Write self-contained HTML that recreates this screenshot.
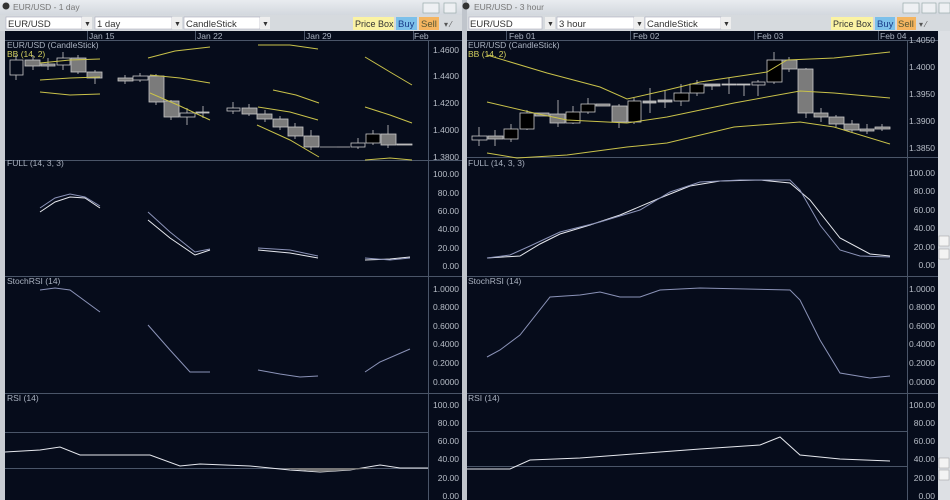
<!DOCTYPE html>
<html><head><meta charset="utf-8"><style>
body{margin:0;width:950px;height:500px;overflow:hidden;background:#c9cdd3;font-family:"Liberation Sans",sans-serif}
svg{position:absolute;left:0;top:0}
text{font-family:"Liberation Sans",sans-serif}
</style></head><body>
<svg width="950" height="500" viewBox="0 0 950 500">
<defs><linearGradient id="tb" x1="0" y1="0" x2="0" y2="1"><stop offset="0" stop-color="#e9ecf0"/><stop offset="1" stop-color="#d3d8de"/></linearGradient></defs>
<rect x="0" y="0" width="950" height="15" fill="url(#tb)"/>
<rect x="0" y="15" width="950" height="16" fill="#d6dade"/>
<rect x="462" y="0" width="5" height="500" fill="#c0c5cc"/>
<circle cx="6" cy="6" r="3.5" fill="#333"/><text x="13" y="10" font-size="8.5" fill="#777">EUR/USD - 1 day</text>
<circle cx="466" cy="6" r="3.5" fill="#333"/><text x="474" y="10" font-size="8.5" fill="#777">EUR/USD - 3 hour</text>
<rect x="423" y="3" width="16" height="10" fill="#eef0f3" stroke="#9aa" stroke-width=".7"/><rect x="444" y="3" width="12" height="10" fill="#eef0f3" stroke="#9aa" stroke-width=".7"/>
<rect x="903" y="3" width="16" height="10" fill="#eef0f3" stroke="#9aa" stroke-width=".7"/><rect x="922" y="3" width="14" height="10" fill="#eef0f3" stroke="#9aa" stroke-width=".7"/><rect x="939" y="3" width="11" height="10" fill="#eef0f3" stroke="#9aa" stroke-width=".7"/>
<g font-size="9.5" fill="#333">
<rect x="6" y="17" width="76" height="12" fill="#fff" stroke="#aab" stroke-width=".6"/><text x="8" y="27">EUR/USD</text><rect x="82" y="17" width="10" height="12" fill="#eee"/><text x="84" y="26" font-size="7">▼</text>
<rect x="95" y="17" width="77" height="12" fill="#fff" stroke="#aab" stroke-width=".6"/><text x="97" y="27">1 day</text><rect x="172" y="17" width="10" height="12" fill="#eee"/><text x="174" y="26" font-size="7">▼</text>
<rect x="184" y="17" width="76" height="12" fill="#fff" stroke="#aab" stroke-width=".6"/><text x="186" y="27">CandleStick</text><rect x="260" y="17" width="10" height="12" fill="#eee"/><text x="262" y="26" font-size="7">▼</text>
<rect x="353" y="17" width="41" height="13" fill="#fbf3a3"/><text x="355" y="27" font-size="9">Price Box</text>
<rect x="396" y="17" width="21" height="13" fill="#7cc0ea"/><text x="398" y="27" fill="#1a3c8a">Buy</text>
<rect x="419" y="17" width="20" height="13" fill="#f5b560"/><text x="421" y="27" fill="#553">Sell</text>
<text x="444" y="27" font-size="8" fill="#555">▾ ⁄</text>
<rect x="469" y="17" width="73" height="12" fill="#fff" stroke="#aab" stroke-width=".6"/><text x="470" y="27">EUR/USD</text><rect x="545" y="17" width="10" height="12" fill="#eee"/><text x="547" y="26" font-size="7">▼</text>
<rect x="557" y="17" width="77" height="12" fill="#fff" stroke="#aab" stroke-width=".6"/><text x="559" y="27">3 hour</text><rect x="634" y="17" width="10" height="12" fill="#eee"/><text x="636" y="26" font-size="7">▼</text>
<rect x="645" y="17" width="76" height="12" fill="#fff" stroke="#aab" stroke-width=".6"/><text x="647" y="27">CandleStick</text><rect x="721" y="17" width="10" height="12" fill="#eee"/><text x="723" y="26" font-size="7">▼</text>
<rect x="831" y="17" width="42" height="13" fill="#fbf3a3"/><text x="833" y="27" font-size="9">Price Box</text>
<rect x="875" y="17" width="20" height="13" fill="#7cc0ea"/><text x="877" y="27" fill="#1a3c8a">Buy</text>
<rect x="897" y="17" width="19" height="13" fill="#f5b560"/><text x="898" y="27" fill="#553">Sell</text>
<text x="919" y="27" font-size="8" fill="#555">▾ ⁄</text>
</g>
<rect x="5" y="31" width="457" height="469" fill="#060c1b"/>
<rect x="467" y="31" width="471" height="469" fill="#060c1b"/>
<rect x="938" y="31" width="12" height="469" fill="#dde0e4"/>
<rect x="939" y="236" width="10" height="10" fill="#f3f3f3" stroke="#999" stroke-width=".5"/><rect x="939" y="249" width="10" height="10" fill="#f3f3f3" stroke="#999" stroke-width=".5"/>
<rect x="939" y="458" width="10" height="10" fill="#f3f3f3" stroke="#999" stroke-width=".5"/><rect x="939" y="470" width="10" height="10" fill="#f3f3f3" stroke="#999" stroke-width=".5"/>
<g stroke="#4a5568" stroke-width="1" fill="none">
<line x1="5" y1="40.5" x2="462" y2="40.5"/><line x1="467" y1="40.5" x2="938" y2="40.5"/>
<line x1="428.5" y1="40" x2="428.5" y2="500"/><line x1="907.5" y1="40" x2="907.5" y2="500"/>
<line x1="5" y1="160.5" x2="462" y2="160.5"/><line x1="467" y1="157.5" x2="938" y2="157.5"/>
<line x1="5" y1="276.5" x2="462" y2="276.5"/><line x1="467" y1="276.5" x2="938" y2="276.5"/>
<line x1="5" y1="393.5" x2="462" y2="393.5"/><line x1="467" y1="393.5" x2="938" y2="393.5"/>
<line x1="5" y1="432.5" x2="428" y2="432.5"/><line x1="5" y1="468.5" x2="428" y2="468.5"/>
<line x1="467" y1="431.5" x2="907" y2="431.5"/><line x1="467" y1="466.5" x2="907" y2="466.5"/>
<line x1="87.5" y1="31" x2="87.5" y2="40"/><line x1="195.5" y1="31" x2="195.5" y2="40"/><line x1="304.5" y1="31" x2="304.5" y2="40"/><line x1="413.5" y1="31" x2="413.5" y2="40"/>
<line x1="506.5" y1="31" x2="506.5" y2="40"/><line x1="630.5" y1="31" x2="630.5" y2="40"/><line x1="754.5" y1="31" x2="754.5" y2="40"/><line x1="878.5" y1="31" x2="878.5" y2="40"/>
</g>
<g font-size="8.5" fill="#aab2c0">
<text x="89" y="39">Jan 15</text><text x="197" y="39">Jan 22</text><text x="306" y="39">Jan 29</text><text x="414" y="39">Feb</text>
<text x="509" y="39">Feb 01</text><text x="633" y="39">Feb 02</text><text x="757" y="39">Feb 03</text><text x="880" y="39">Feb 04</text>
<text x="7" y="48">EUR/USD (CandleStick)</text><text x="468" y="48">EUR/USD (CandleStick)</text>
<text x="7" y="166">FULL (14, 3, 3)</text><text x="468" y="166">FULL (14, 3, 3)</text>
<text x="7" y="284">StochRSI (14)</text><text x="468" y="284">StochRSI (14)</text>
<text x="7" y="401">RSI (14)</text><text x="468" y="401">RSI (14)</text>
</g>
<g font-size="8.5" fill="#d4d060"><text x="7" y="57">BB (14, 2)</text><text x="468" y="57">BB (14, 2)</text></g>
<g font-size="8.5" fill="#b8bec8" text-anchor="end">
<text x="459" y="53">1.4600</text><text x="459" y="79">1.4400</text><text x="459" y="106">1.4200</text><text x="459" y="133">1.4000</text><text x="459" y="160">1.3800</text>
<text x="459" y="177">100.00</text><text x="459" y="196">80.00</text><text x="459" y="214">60.00</text><text x="459" y="232">40.00</text><text x="459" y="251">20.00</text><text x="459" y="269">0.00</text>
<text x="459" y="292">1.0000</text><text x="459" y="310">0.8000</text><text x="459" y="329">0.6000</text><text x="459" y="347">0.4000</text><text x="459" y="366">0.2000</text><text x="459" y="385">0.0000</text>
<text x="459" y="408">100.00</text><text x="459" y="426">80.00</text><text x="459" y="444">60.00</text><text x="459" y="462">40.00</text><text x="459" y="481">20.00</text><text x="459" y="499">0.00</text>
<text x="935" y="43">1.4050</text><text x="935" y="70">1.4000</text><text x="935" y="97">1.3950</text><text x="935" y="124">1.3900</text><text x="935" y="151">1.3850</text>
<text x="935" y="176">100.00</text><text x="935" y="194">80.00</text><text x="935" y="213">60.00</text><text x="935" y="231">40.00</text><text x="935" y="250">20.00</text><text x="935" y="268">0.00</text>
<text x="935" y="292">1.0000</text><text x="935" y="310">0.8000</text><text x="935" y="329">0.6000</text><text x="935" y="347">0.4000</text><text x="935" y="366">0.2000</text><text x="935" y="385">0.0000</text>
<text x="935" y="408">100.00</text><text x="935" y="426">80.00</text><text x="935" y="444">60.00</text><text x="935" y="462">40.00</text><text x="935" y="481">20.00</text><text x="935" y="499">0.00</text>
</g>
<g stroke="#c8c8c8" stroke-width="0.8">
<line x1="16" y1="55" x2="16" y2="80"/><line x1="33" y1="55" x2="33" y2="70"/><line x1="48" y1="58" x2="48" y2="70"/><line x1="63" y1="52" x2="63" y2="70"/><line x1="78" y1="55" x2="78" y2="74"/><line x1="95" y1="70" x2="95" y2="84"/><line x1="125" y1="75" x2="125" y2="84"/><line x1="140" y1="73" x2="140" y2="82"/><line x1="156" y1="74" x2="156" y2="105"/><line x1="171" y1="100" x2="171" y2="120"/><line x1="187" y1="108" x2="187" y2="125"/><line x1="203" y1="106" x2="203" y2="118"/><line x1="233" y1="102" x2="233" y2="114"/><line x1="249" y1="104" x2="249" y2="116"/><line x1="265" y1="110" x2="265" y2="122"/><line x1="280" y1="116" x2="280" y2="130"/><line x1="295" y1="123" x2="295" y2="139"/><line x1="311" y1="130" x2="311" y2="150"/><line x1="358" y1="138" x2="358" y2="149"/><line x1="373" y1="130" x2="373" y2="145"/><line x1="388" y1="125" x2="388" y2="148"/>
<line x1="320" y1="147" x2="337" y2="147"/><line x1="337" y1="147" x2="350" y2="147"/>
</g>
<g stroke="#c8c8c8" stroke-width="0.8">
<rect x="10" y="60" width="13" height="15" fill="#060c1b"/>
<rect x="25" y="60" width="15" height="6" fill="#777"/>
<rect x="41" y="64" width="14" height="2" fill="#777"/>
<rect x="57" y="58" width="13" height="7" fill="#060c1b"/>
<rect x="71" y="58" width="15" height="14" fill="#7b7b7b"/>
<rect x="87" y="72" width="15" height="6" fill="#7b7b7b"/>
<rect x="118" y="78" width="15" height="3" fill="#7b7b7b"/>
<rect x="133" y="76" width="15" height="4" fill="#060c1b"/>
<rect x="149" y="76" width="15" height="26" fill="#7b7b7b"/>
<rect x="164" y="101" width="15" height="16" fill="#7b7b7b"/>
<rect x="180" y="113" width="15" height="4" fill="#060c1b"/>
<rect x="196" y="112" width="13" height="1" fill="#888"/>
<rect x="227" y="108" width="13" height="3" fill="#060c1b"/>
<rect x="242" y="108" width="15" height="6" fill="#7b7b7b"/>
<rect x="257" y="114" width="15" height="5" fill="#7b7b7b"/>
<rect x="273" y="119" width="15" height="8" fill="#7b7b7b"/>
<rect x="288" y="127" width="15" height="9" fill="#7b7b7b"/>
<rect x="304" y="136" width="15" height="11" fill="#7b7b7b"/>
<rect x="351" y="143" width="14" height="4" fill="#060c1b"/>
<rect x="366" y="134" width="14" height="9" fill="#000"/>
<rect x="381" y="134" width="15" height="11" fill="#7b7b7b"/>
<rect x="397" y="144" width="15" height="1" fill="#888"/>
</g>
<g stroke="#c9c24a" stroke-width="1" fill="none">
<polyline points="40,63 70,60 100,59"/><polyline points="40,80 70,78 100,77"/><polyline points="40,92 70,95 100,94"/>
<polyline points="148,58 175,51 210,47"/><polyline points="150,75 180,78 210,83"/><polyline points="150,93 180,106 210,120"/>
<polyline points="258,45 290,45 318,49"/><polyline points="258,107 290,112 318,120"/><polyline points="257,125 290,140 319,157"/>
<polyline points="365,57 390,72 412,85"/><polyline points="365,107 390,115 412,123"/><polyline points="365,160 390,158 412,160"/>
<polyline points="273,90 296,95 319,103"/>
</g>
<g stroke="#e6e8ee" stroke-width="1" fill="none">
<polyline points="40,212 55,202 70,197 85,198 100,208"/>
<polyline points="148,220 170,238 195,255 210,250"/>
<polyline points="258,250 290,253 318,258"/>
<polyline points="365,260 390,259 410,257"/>
</g>
<g stroke="#8b93b8" stroke-width="1" fill="none">
<polyline points="40,208 55,198 70,194 85,197 100,206"/>
<polyline points="148,212 170,232 195,252 210,249"/>
<polyline points="258,248 290,250 318,256"/>
<polyline points="365,258 390,260 410,258"/>
<polyline points="40,290 55,288 70,290 100,312"/>
<polyline points="148,325 170,350 190,372 210,372"/>
<polyline points="258,370 280,374 300,377 318,376"/>
<polyline points="365,372 380,362 410,349"/>
</g>
<polyline points="5,452 40,450 60,447 80,455 150,455 180,466 200,464 250,466 290,470 320,472 350,470 380,465 400,468 428,468" stroke="#e6e8ee" stroke-width="1" fill="none"/>
<polygon points="280,468 320,472 350,470 375,468" fill="#777"/>
<g stroke="#c8c8c8" stroke-width="0.8">
<line x1="479" y1="127" x2="479" y2="146"/><line x1="495" y1="130" x2="495" y2="146"/><line x1="511" y1="124" x2="511" y2="142"/><line x1="527" y1="110" x2="527" y2="130"/><line x1="558" y1="100" x2="558" y2="127"/><line x1="573" y1="106" x2="573" y2="124"/><line x1="588" y1="98" x2="588" y2="114"/><line x1="619" y1="104" x2="619" y2="128"/><line x1="634" y1="98" x2="634" y2="124"/><line x1="650" y1="88" x2="650" y2="113"/><line x1="665" y1="90" x2="665" y2="108"/><line x1="681" y1="84" x2="681" y2="106"/><line x1="697" y1="80" x2="697" y2="96"/><line x1="712" y1="85" x2="712" y2="90"/><line x1="729" y1="78" x2="729" y2="94"/><line x1="744" y1="84" x2="744" y2="96"/><line x1="758" y1="80" x2="758" y2="96"/><line x1="774" y1="52" x2="774" y2="84"/><line x1="789" y1="57" x2="789" y2="72"/><line x1="806" y1="68" x2="806" y2="118"/><line x1="821" y1="108" x2="821" y2="122"/><line x1="836" y1="115" x2="836" y2="127"/><line x1="852" y1="120" x2="852" y2="132"/><line x1="867" y1="124" x2="867" y2="134"/><line x1="882" y1="124" x2="882" y2="131"/>
<rect x="472" y="136" width="15" height="4" fill="#060c1b"/>
<rect x="488" y="136" width="15" height="3" fill="#7b7b7b"/>
<rect x="504" y="129" width="14" height="10" fill="#000"/>
<rect x="520" y="113" width="14" height="16" fill="#000"/>
<rect x="535" y="113" width="14" height="3" fill="#7b7b7b"/>
<rect x="550" y="114" width="15" height="9" fill="#7b7b7b"/>
<rect x="566" y="112" width="14" height="11" fill="#000"/>
<rect x="581" y="104" width="14" height="8" fill="#000"/>
<rect x="596" y="104" width="14" height="2" fill="#7b7b7b"/>
<rect x="612" y="106" width="15" height="16" fill="#7b7b7b"/>
<rect x="628" y="101" width="13" height="21" fill="#000"/>
<rect x="643" y="101" width="13" height="2" fill="#aaa"/>
<rect x="658" y="100" width="14" height="2" fill="#aaa"/>
<rect x="674" y="93" width="15" height="8" fill="#000"/>
<rect x="690" y="84" width="14" height="9" fill="#000"/>
<rect x="705" y="84" width="15" height="2" fill="#aaa"/>
<rect x="722" y="84" width="14" height="1" fill="#aaa"/>
<rect x="737" y="84" width="13" height="1" fill="#aaa"/>
<rect x="752" y="82" width="13" height="3" fill="#060c1b"/>
<rect x="767" y="60" width="15" height="22" fill="#000"/>
<rect x="782" y="60" width="15" height="9" fill="#7b7b7b"/>
<rect x="798" y="69" width="15" height="44" fill="#7b7b7b"/>
<rect x="814" y="113" width="14" height="4" fill="#7b7b7b"/>
<rect x="829" y="117" width="15" height="7" fill="#7b7b7b"/>
<rect x="844" y="124" width="15" height="6" fill="#7b7b7b"/>
<rect x="860" y="129" width="14" height="2" fill="#7b7b7b"/>
<rect x="875" y="127" width="15" height="2" fill="#7b7b7b"/>
</g>
<g stroke="#c9c24a" stroke-width="1" fill="none">
<polyline points="487,55 547,73 600,87 627,99 667,90 700,82 767,72 787,60 834,58 890,52"/>
<polyline points="487,102 534,113 567,120 627,123 667,117 734,103 800,91 834,93 890,98"/>
<polyline points="487,153 517,158 567,155 627,147 667,143 734,127 800,122 834,127 890,144"/>
</g>
<g stroke="#e6e8ee" stroke-width="1" fill="none">
<polyline points="487,258 520,256 540,244 560,234 590,225 620,215 660,198 690,186 720,181 760,180 790,183 810,200 840,238 870,254 890,256"/>
<polyline points="467,469 510,469 530,460 580,458 620,455 660,452 700,449 760,445 780,437 800,455 840,459 890,461"/>
</g>
<g stroke="#8b93b8" stroke-width="1" fill="none">
<polyline points="487,258 510,255 530,246 560,232 600,222 640,210 670,192 700,182 740,180 790,180 800,190 820,225 840,250 860,256 890,257"/>
<polyline points="487,357 500,350 520,335 550,297 580,295 600,292 620,297 640,297 660,290 700,288 790,290 800,300 820,340 840,373 870,378 890,376"/>
</g>
</svg>
</body></html>
